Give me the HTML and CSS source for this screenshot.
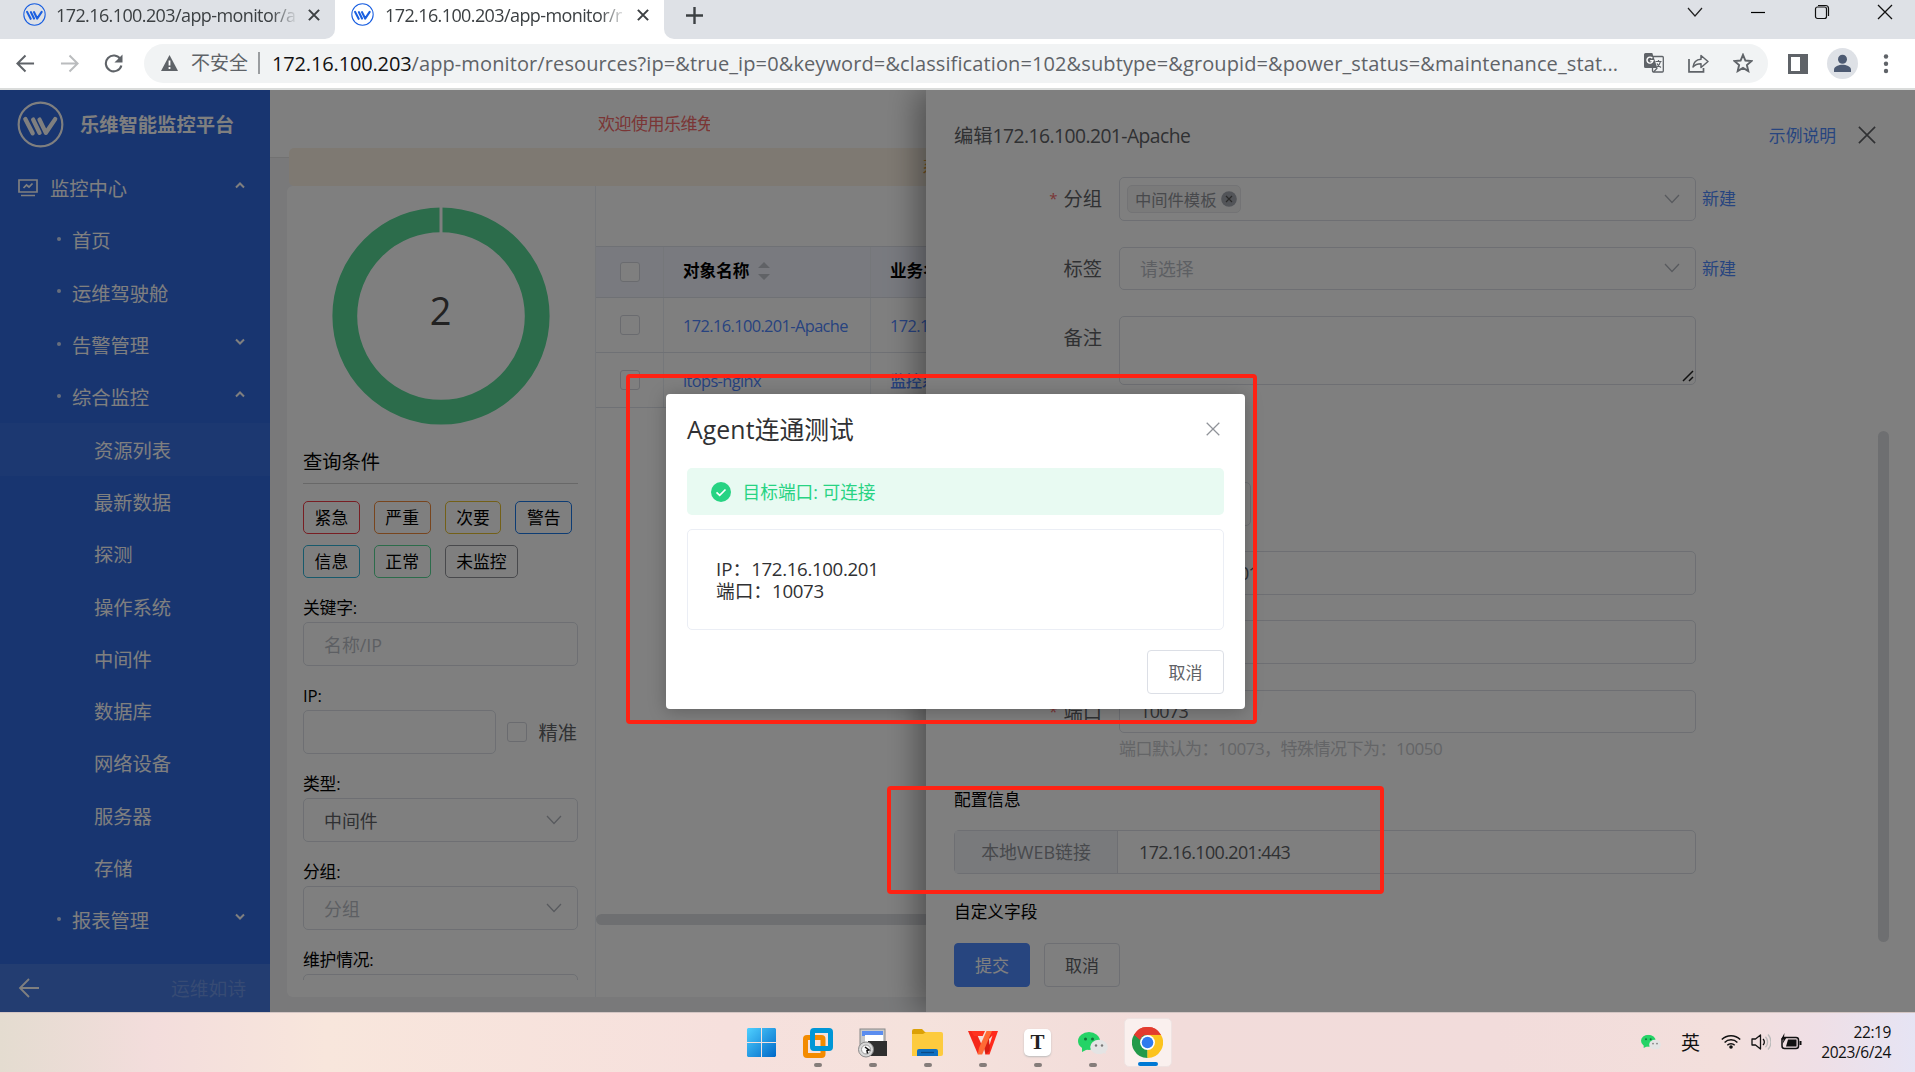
FILE: index.html
```html
<!DOCTYPE html>
<html lang="zh-CN">
<head>
<meta charset="utf-8">
<title>乐维智能监控平台</title>
<link rel="stylesheet" href="styles.css">
</head>
<body>
<svg class="defs" width="0" height="0">
  <defs>
    <symbol id="logo" viewBox="0 0 48 48"><circle cx="24" cy="24" r="22.3" fill="none" stroke="currentColor" stroke-width="2.2"/><path d="M8.500 18.500L16 33M16.500 19L23 32.500M23 19l6.500 13.500L39 18.500" fill="none" stroke="currentColor" stroke-width="4.400" stroke-linecap="round" stroke-linejoin="round"/></symbol>
    <symbol id="down" viewBox="0 0 16 10"><path d="M1 1l7 7.500L15 1" fill="none" stroke="currentColor" stroke-width="1.300"/></symbol>
    <symbol id="caret" viewBox="0 0 10 8"><path d="M1 1.500l4 4 4-4" fill="none" stroke="currentColor" stroke-width="2"/></symbol>
    <symbol id="cross" viewBox="0 0 20 20"><path d="M1 1l18 18M19 1L1 19" fill="none" stroke="currentColor" stroke-width="1.800"/></symbol>
    <symbol id="cross-bold" viewBox="0 0 20 20"><path d="M1.500 1.500l17 17M18.500 1.500l-17 17" fill="none" stroke="currentColor" stroke-width="3.400"/></symbol>
    <symbol id="wechat" viewBox="0 0 30 22"><ellipse cx="11" cy="9" rx="11" ry="9" fill="#25d366"/><path d="M4 14l0 6 6-3z" fill="#25d366"/><circle cx="7.500" cy="7" r="1.500" fill="#12733a"/><circle cx="14.500" cy="7" r="1.500" fill="#12733a"/><ellipse cx="21" cy="15" rx="8.800" ry="7.200" fill="#e4e4e4"/><path d="M24 20l4 2-1-4z" fill="#e4e4e4"/><circle cx="18" cy="13.500" r="1.200" fill="#777"/><circle cx="24" cy="13.500" r="1.200" fill="#777"/></symbol>
  </defs>
</svg>

<header class="tabstrip">
  <div class="tab"><svg class="fav"><use href="#logo"/></svg><span class="tab-title">172.16.100.203/app-monitor/a</span><svg class="tab-x"><use href="#cross-bold"/></svg></div>
  <div class="tab active"><svg class="fav"><use href="#logo"/></svg><span class="tab-title">172.16.100.203/app-monitor/r</span><svg class="tab-x"><use href="#cross-bold"/></svg></div>
  <div class="newtab"><svg width="17" height="17" viewBox="0 0 17 17"><path d="M8.500 0v17M0 8.500h17" stroke="#3c4043" stroke-width="2.400"/></svg></div>
  <div class="winctl">
    <svg width="16" height="16" viewBox="0 0 16 16"><path d="M1 4l7 8 7-8" fill="none" stroke="#222" stroke-width="1.200"/></svg>
    <svg width="16" height="16" viewBox="0 0 16 16"><path d="M1 8.500h14" stroke="#000" stroke-width="1.200"/></svg>
    <svg width="16" height="16" viewBox="0 0 16 16"><rect x="1.500" y="3" width="11" height="11.500" rx="2" fill="none" stroke="#111" stroke-width="1.200"/><path d="M4 1.500h7.500a3 3 0 0 1 3 3V12" fill="none" stroke="#111" stroke-width="1.200"/></svg>
    <svg width="16" height="16" viewBox="0 0 16 16"><path d="M1 1l14 14M15 1L1 15" stroke="#111" stroke-width="1.300"/></svg>
  </div>
</header>

<div class="toolbar">
  <svg class="nav-btn" viewBox="0 0 20 20"><path d="M19 10H2M10 1.500L1.500 10l8.500 8.500" fill="none" stroke="#5f6368" stroke-width="2.100"/></svg>
  <svg class="nav-btn" viewBox="0 0 20 20"><path d="M1 10h17M10 1.500l8.500 8.500-8.500 8.500" fill="none" stroke="#babcbe" stroke-width="2.100"/></svg>
  <svg class="nav-btn" viewBox="0 0 20 20"><path d="M17.300 5.500A8.300 8.300 0 1 0 18.300 12" fill="none" stroke="#5f6368" stroke-width="2.200"/><path d="M19.500 0.500v8.500h-8.500z" fill="#5f6368"/></svg>
  <div class="omnibox">
    <svg width="17" height="16" viewBox="0 0 17 16"><path d="M8.500 0L17 16H0z" fill="#5f6368"/><path d="M8.500 5.500v5M8.500 12v2" stroke="#fff" stroke-width="1.800"/></svg>
    <span class="insecure">不安全</span>
    <span class="url"><b>172.16.100.203</b>/app-monitor/resources?ip=&amp;true_ip=0&amp;keyword=&amp;classification=102&amp;subtype=&amp;groupid=&amp;power_status=&amp;maintenance_stat...</span>
    <span class="omni-icons">
      <svg width="20" height="20" viewBox="0 0 20 20"><rect x="8.500" y="3.500" width="10.800" height="15.500" rx="1" fill="#f1f3f4" stroke="#5f6368" stroke-width="1.300"/><path d="M1.500 0h6.800l5 15H1.500A1.500 1.500 0 0 1 0 13.500v-12A1.500 1.500 0 0 1 1.500 0z" fill="#5f6368"/><path d="M8.300 5.200a3 3 0 1 0 .6 2.600H6.200" fill="none" stroke="#fff" stroke-width="1.400"/><path d="M11.500 8.500h6M14.500 7v1.500M12.500 14.500c2-1.500 3.500-3.500 4-6M13 10.500c.8 1.800 2.200 3 4 4M9.500 19l3.800-4" fill="none" stroke="#5f6368" stroke-width="1.200"/></svg>
      <svg width="21" height="20" viewBox="0 0 21 20"><path d="M1 6v12.800h14.500V15" fill="none" stroke="#5f6368" stroke-width="1.700"/><path d="M5 14c.5-5 3.500-7.500 8-7.800V2.500l7 6-7 6v-3.700c-3.500 0-6 .9-8 3.200z" fill="none" stroke="#5f6368" stroke-width="1.500" stroke-linejoin="round"/></svg>
      <svg width="20" height="20" viewBox="0 0 20 20"><path d="M10 1.800l2.400 5.700 6.200.5-4.700 4 1.400 6.100L10 14.900l-5.300 3.200L6.100 12l-4.700-4 6.200-.5z" fill="none" stroke="#5f6368" stroke-width="1.900"/></svg>
    </span>
  </div>
  <svg class="side-panel" width="20" height="20" viewBox="0 0 20 20"><path d="M0 0h20v20H0zM3 3v14h9V3z" fill="#5f6368" fill-rule="evenodd"/></svg>
  <svg class="avatar" width="31" height="31" viewBox="0 0 31 31"><circle cx="15.500" cy="15.500" r="15.500" fill="#dee1e6"/><circle cx="15.500" cy="11.300" r="4.500" fill="#4d5a72"/><path d="M7 24v-2.500c0-3 5-4.800 8.500-4.800s8.500 1.800 8.500 4.800V24z" fill="#4d5a72"/></svg>
  <svg class="more" width="6" height="20" viewBox="0 0 6 20"><circle cx="3" cy="2.500" r="2.200" fill="#5f6368"/><circle cx="3" cy="9.800" r="2.200" fill="#5f6368"/><circle cx="3" cy="17" r="2.200" fill="#5f6368"/></svg>
</div>

<div class="viewport">
  <aside class="sidebar">
    <div class="brand"><svg><use href="#logo"/></svg><span>乐维智能监控平台</span></div>
    <nav class="menu">
      <div class="item root"><svg class="mon" viewBox="0 0 20 18"><path d="M1 1h18v12H1zM3 16.500h14" fill="none" stroke="currentColor" stroke-width="1.700"/><path d="M5.500 9l3-3 2.500 2 3.500-3.500" fill="none" stroke="currentColor" stroke-width="1.700"/></svg>监控中心<svg class="caret up"><use href="#caret"/></svg></div>
      <div class="item lvl1">首页</div>
      <div class="item lvl1">运维驾驶舱</div>
      <div class="item lvl1">告警管理<svg class="caret"><use href="#caret"/></svg></div>
      <div class="item lvl1">综合监控<svg class="caret up"><use href="#caret"/></svg></div>
      <div class="item lvl2 selected">资源列表</div>
      <div class="item lvl2">最新数据</div>
      <div class="item lvl2">探测</div>
      <div class="item lvl2">操作系统</div>
      <div class="item lvl2">中间件</div>
      <div class="item lvl2">数据库</div>
      <div class="item lvl2">网络设备</div>
      <div class="item lvl2">服务器</div>
      <div class="item lvl2">存储</div>
      <div class="item lvl1">报表管理<svg class="caret"><use href="#caret"/></svg></div>
    </nav>
    <div class="side-foot"><svg width="21" height="20" viewBox="0 0 21 20"><path d="M21 10H2M11 1L2 10l9 9" fill="none" stroke="currentColor" stroke-width="1.800"/></svg><span>运维如诗</span></div>
  </aside>

  <main class="main">
    <div class="topbar"><span class="welcome">欢迎使用乐维免</span></div>
    <div class="notice">系统授权即将到期</div>
    <div class="content">
      <section class="filters">
        <div class="donut">
          <svg width="218" height="218" viewBox="0 0 218 218"><circle cx="109" cy="109" r="96.200" fill="none" stroke="#58d896" stroke-width="24.800"/><path d="M109 0v26" stroke="#fff" stroke-width="3"/></svg>
          <span>2</span>
        </div>
        <h3>查询条件</h3>
        <div class="tags">
          <span class="tag red">紧急</span><span class="tag orange">严重</span><span class="tag yellow">次要</span><span class="tag blue">警告</span>
          <span class="tag cyan">信息</span><span class="tag green">正常</span><span class="tag gray">未监控</span>
        </div>
        <label>关键字:</label><div class="input ph">名称/IP</div>
        <label>IP:</label>
        <div class="ip-row"><div class="input"></div><i class="check"></i><span>精准</span></div>
        <label>类型:</label><div class="input select">中间件<svg><use href="#down"/></svg></div>
        <label>分组:</label><div class="input select ph">分组<svg><use href="#down"/></svg></div>
        <label>维护情况:</label><div class="input"></div>
      </section>
      <section class="table-wrap">
        <div class="table">
          <div class="tr th"><div><i class="check"></i></div><div><span>对象名称</span><svg class="sort" viewBox="0 0 12 18"><path d="M0 6l6-6 6 6zM0 12l6 6 6-6z" fill="#c0c4cc"/></svg></div><div><span>业务名称</span></div></div>
          <div class="tr"><div><i class="check"></i></div><div class="a">172.16.100.201-Apache</div><div class="a">172.16.100.201</div></div>
          <div class="tr"><div><i class="check"></i></div><div class="a">itops-nginx</div><div class="a">监控系统</div></div>
        </div>
        <div class="hscroll"></div>
      </section>
    </div>
  </main>

  <section class="drawer">
    <div class="drawer-head"><span>编辑<em>172.16.100.201-Apache</em></span><a>示例说明</a><svg><use href="#cross"/></svg></div>
    <div class="row"><label class="req">分组</label><div class="input select multi"><span class="chip">中间件模板<svg viewBox="0 0 16 16"><circle cx="8" cy="8" r="7.800" fill="#a4a8b0"/><path d="M5 5l6 6M11 5l-6 6" stroke="#555" stroke-width="1.200"/></svg></span><svg><use href="#down"/></svg></div><a>新建</a></div>
    <div class="row"><label>标签</label><div class="input select ph">请选择<svg><use href="#down"/></svg></div><a>新建</a></div>
    <div class="row area"><label>备注</label><div class="input"><svg class="grip" viewBox="0 0 12 12"><path d="M1 11L11 1M7 11l4-4" stroke="#222" stroke-width="1.500"/></svg></div></div>
    <div class="row short"><label></label><div class="input"></div></div>
    <div class="row"><label></label><div class="input"><em>172.16.100.201</em></div></div>
    <div class="row"><label></label><div class="input"></div></div>
    <div class="row"><label class="req">端口</label><div class="input"><em>10073</em></div></div>
    <p class="hint">端口默认为：<em>10073</em>，特殊情况下为：<em>10050</em></p>
    <h4>配置信息</h4>
    <div class="group"><span>本地<em>WEB</em>链接</span><div><em>172.16.100.201:443</em></div></div>
    <h4 class="custom">自定义字段</h4>
    <div class="actions"><span class="btn primary">提交</span><span class="btn">取消</span></div>
    <div class="vscroll"></div>
  </section>

  <div class="mask"></div>

  <section class="modal">
    <div class="modal-head"><span><em>Agent</em>连通测试</span><svg><use href="#cross"/></svg></div>
    <div class="alert"><svg width="20" height="20" viewBox="0 0 20 20"><circle cx="10" cy="10" r="10" fill="#27d383"/><path d="M5.500 10.300l3.200 3 5.800-5.800" fill="none" stroke="#fff" stroke-width="1.700"/></svg><span>目标端口: 可连接</span></div>
    <div class="result"><p>IP：<em>172.16.100.201</em></p><p>端口：<em>10073</em></p></div>
    <div class="modal-foot"><span class="btn">取消</span></div>
  </section>
</div>

<footer class="taskbar">
  <div class="apps">
    <div class="app"><svg width="29" height="29" viewBox="0 0 29 29"><defs><linearGradient id="win" x1="0" y1="0" x2="1" y2="1"><stop offset="0" stop-color="#4fd0ff"/><stop offset="1" stop-color="#0068c8"/></linearGradient></defs><path d="M1 0h13v14H0V1zM15 0h13l1 1v13H15zM0 15h14v14H1l-1-1zM15 15h14v13l-1 1H15z" fill="url(#win)"/></svg></div>
    <div class="app on"><svg width="30" height="30" viewBox="0 0 30 30"><rect x="9.500" y="2.500" width="18" height="18" rx="1.500" fill="none" stroke="#0096d6" stroke-width="5"/><rect x="2.500" y="9.500" width="17.500" height="18" rx="1.500" fill="none" stroke="#f38b00" stroke-width="5"/><path d="M9.500 7v6M14 20.500h9" fill="none" stroke="#0096d6" stroke-width="5"/></svg></div>
    <div class="app on"><svg width="30" height="30" viewBox="0 0 30 30"><rect x="2" y="1" width="25" height="18" fill="#c9c9c9" stroke="#888"/><rect x="4" y="3" width="21" height="5" fill="#5b8def"/><rect x="7" y="7" width="18" height="10" fill="#fff"/><rect x="10" y="13" width="19" height="15" fill="#2f2f2f"/><circle cx="8" cy="21.500" r="7.500" fill="#d8d8d8" stroke="#888"/><circle cx="8" cy="21.500" r="4.500" fill="#fafafa" stroke="#999"/><path d="M7 19l4 3-2 .5.500 3" stroke="#111" stroke-width="1.500" fill="none"/></svg></div>
    <div class="app on"><svg width="31" height="29" viewBox="0 0 31 29"><path d="M0 3a2 2 0 0 1 2-2h8l3 3h14v8H0z" fill="#dca106"/><path d="M0 6h11l3-2h15a2 2 0 0 1 2 2v20a2 2 0 0 1-2 2H0z" fill="#fdcb3e"/><path d="M5 28v-5a2 2 0 0 1 2-2h17a2 2 0 0 1 2 2v5z" fill="#0f6fc0"/><path d="M9 24.500h13" stroke="#0a4a86" stroke-width="1.300"/></svg></div>
    <div class="app on"><svg width="30" height="24" viewBox="0 0 30 24"><path d="M0 0h7.500L14 14.500 10 23.500z" fill="#f5281a"/><path d="M3 0h14l-2.300 5H6z" fill="#ff3320"/><path d="M22.500 0H30l-8.500 23.500H17.500l1-8z" fill="#ff2a1c"/><path d="M18.500 4l4 0-1 16-4 3.500-2.500-11z" fill="#d81e12"/><path d="M9.800 23.500h4.400L24 0h-5.500L11 17z" fill="#ff6a35"/><path d="M21 8l3.500-3.500L21.500 14z" fill="#f5e2dc"/></svg></div>
    <div class="app on"><div class="typora">T</div></div>
    <div class="app on"><svg width="30" height="22"><use href="#wechat"/></svg></div>
    <div class="app current"><svg width="31" height="31" viewBox="0 0 48 48"><path d="M24 24L3.200 12A24 24 0 0 1 44.800 12z" fill="#e33b2e"/><path d="M24 24L44.800 12A24 24 0 0 1 24 48z" fill="#fcc31e"/><path d="M24 24V48A24 24 0 0 1 3.200 12z" fill="#229a4a"/><path d="M24 12h20.800L34 30z" fill="#fcc31e"/><path d="M34.400 30L24 48 24 34z" fill="#fcc31e"/><path d="M3.200 12L13.600 30 24 24 24 12z" fill="#229a4a"/><path d="M3.200 12A24 24 0 0 1 44.800 12H24a12 12 0 0 0-11.500 8z" fill="#e33b2e"/><circle cx="24" cy="24" r="11.500" fill="#fff"/><circle cx="24" cy="24" r="9" fill="#2f7bef"/></svg></div>
  </div>
  <div class="tray">
    <svg width="20" height="16" viewBox="0 0 30 22"><use href="#wechat"/></svg>
    <span class="ime">英</span>
    <svg width="20" height="15" viewBox="0 0 20 15"><path d="M.8 5.500a13 13 0 0 1 18.400 0M3.600 8.500a9 9 0 0 1 12.800 0M6.300 11.300a5.200 5.200 0 0 1 7.400 0" fill="none" stroke="#111" stroke-width="1.500"/><circle cx="10" cy="13" r="1.800" fill="#111"/></svg>
    <svg width="20" height="18" viewBox="0 0 20 18"><path d="M1 6h3.500L9.500 2v14l-5-4H1z" fill="none" stroke="#111" stroke-width="1.300" stroke-linejoin="round"/><path d="M12 6a4 4 0 0 1 0 6" fill="none" stroke="#111" stroke-width="1.300"/><path d="M14.500 3.800a7.500 7.500 0 0 1 0 10.400M17 1.500a11 11 0 0 1 0 15" fill="none" stroke="#bbb" stroke-width="1.300"/></svg>
    <svg width="21" height="17" viewBox="0 0 21 17"><rect x="1" y="4.500" width="16.500" height="11" rx="2.500" fill="none" stroke="#111" stroke-width="1.500"/><path d="M5 13.500l2-7h8.500v7zM18.500 8h2v4h-2z" fill="#111"/><path d="M3.500 0L0 6.500h2.500L1.500 11l4-6.500H3z" fill="#111"/></svg>
    <div class="clock"><span>22:19</span><span>2023/6/24</span></div>
  </div>
</footer>

<div class="mark mark-dialog"></div>
<div class="mark mark-link"></div>
</body>
</html>
```
FILE: styles.css
```css
* { box-sizing: border-box; }
body { margin: 0; width: 1915px; height: 1072px; overflow: hidden; position: relative; font-family: "Open Sans", "Noto Sans CJK SC", sans-serif; font-size: 18px; color: #606266; background: #fff; white-space: nowrap; }
h3, h4, p { margin: 0; font-weight: 400; }
em, i { font-style: normal; }
svg { flex: none; display: block; }
.defs { position: absolute; }
a { color: #4f8bff; }

/* browser chrome */
.tabstrip { display: flex; height: 39px; background: #fff; }
.tab { width: 335px; display: flex; align-items: flex-start; padding: 2px 0 0 23px; color: #3c4043; background: #dee1e6; border-radius: 0 0 10px 0; }
.tab.active { width: 329px; background: #fff; padding-left: 16px; }
.fav { width: 23px; height: 23px; color: #1a5fe0; margin-top: 1px; }
.tab-title { width: 246px; margin-left: 10px; line-height: 26px; font-size: 18px; letter-spacing: -.6px; -webkit-mask-image: linear-gradient(90deg, #000 215px, transparent 242px); mask-image: linear-gradient(90deg, #000 215px, transparent 242px); }
.tab.active .tab-title { margin-left: 11px; }
.tab-x { width: 12px; height: 12px; margin: 7px 0 0 6px; color: #3c4043; }
.newtab { padding: 7px 0 0 22px; flex: 1; background: #dee1e6; border-radius: 0 0 0 10px; }
.winctl { display: flex; gap: 47.500px; padding: 4px 22px 0 0; background: #dee1e6; }

.toolbar { display: flex; align-items: center; height: 51px; border-bottom: 2px solid #dadcdb; padding-left: 16px; background: #fff; }
.nav-btn { width: 19px; height: 19px; margin-right: 25px; }
.nav-btn + .nav-btn + .nav-btn { margin-right: 21px; }
.omnibox { display: flex; align-items: center; width: 1624px; height: 39px; margin-bottom: 1px; border-radius: 20px; background: #f1f3f4; padding: 0 15px 0 17px; color: #5f6368; }
.insecure { margin-left: 13px; font-size: 19px; line-height: 22px; padding-right: 10px; border-right: 2px solid #9a9da0; }
.url { margin-left: 12px; width: 1374px; font-size: 20px; letter-spacing: .11px; }
.url b { font-weight: 400; color: #111; letter-spacing: -.15px; }
.omni-icons { display: flex; gap: 24px; }
.side-panel { margin-left: 20px; }
.avatar { margin-left: 19px; }
.more { margin-left: 25px; }

/* application */
.viewport { position: relative; display: flex; height: 922px; overflow: hidden; }
.sidebar { width: 270px; background: #306ae0; color: #fff; display: flex; flex-direction: column; }
.brand { height: 72px; padding: 0 0 4px 17px; display: flex; align-items: center; gap: 16px; font-size: 19.300px; font-weight: 700; }
.brand svg { width: 47px; height: 47px; }
.menu { flex: 1; font-size: 19.300px; }
.item { height: 52.300px; display: flex; align-items: center; padding-right: 25px; }
.root { padding-left: 18px; }
.mon { width: 20px; height: 18px; margin-right: 12px; }
.lvl1 { padding-left: 57px; }
.lvl1::before { content: ""; width: 4px; height: 4px; border-radius: 50%; background: #cfdcf8; margin: -3px 11px 0 0; }
.lvl2 { padding-left: 94px; }
.selected { background: #3870e2; }
.caret { width: 10px; height: 8px; margin: -6px 0 0 auto; }
.caret.up { transform: rotate(180deg); }
.side-foot { height: 48px; background: #467ae2; display: flex; align-items: center; justify-content: space-between; padding: 0 24px 0 18px; font-size: 18.800px; }
.side-foot span { color: #6f97e8; }

.main { width: 1645px; background: #f2f3f5; }
.topbar { height: 68px; background: #fff; border-bottom: 1px solid #e4e4e4; padding-left: 328px; }
.welcome { display: block; width: 112px; overflow: hidden; line-height: 67px; color: #f56c6c; font-size: 17px; letter-spacing: -.5px; }
.notice { height: 38px; margin: -10px 0 0 19px; position: relative; background: #fdf3e5; border-radius: 5px; padding-left: 633px; line-height: 38px; color: #e6a23c; font-size: 17px; }
.content { height: 811px; margin-left: 17px; background: #fff; border-radius: 6px; display: flex; align-items: flex-start; }
.filters { width: 308px; height: 794px; overflow: hidden; padding: 0 17px 0 16px; color: #000; }
.donut { height: 251px; padding-top: 20.500px; display: grid; justify-content: center; }
.donut svg, .donut span { grid-area: 1 / 1; }
.donut span { height: 206px; display: flex; align-items: center; justify-content: center; font-size: 38px; color: #444; }
.filters h3 { height: 47px; line-height: 49px; font-size: 19.300px; border-bottom: 1px solid #d0d0d0; }
.tags { display: flex; flex-wrap: wrap; gap: 11px 14px; margin: 17px -10px 0 0; }
.tag { height: 33px; padding: 0 10.600px; border: 1.500px solid; border-radius: 5px; font-size: 16.800px; line-height: 31px; -webkit-text-fill-color: #000; }
.red { border-color: #f03c46; } .orange { border-color: #f08a3c; } .yellow { border-color: #e6c030; } .blue { border-color: #1a78e8; }
.cyan { border-color: #30b4d8; } .green { border-color: #58d896; } .gray { border-color: #909399; }
.filters label { display: block; line-height: 28px; padding-top: 16px; font-size: 16.800px; height: 44px; letter-spacing: -.2px; }
.input { height: 44px; border: 1.500px solid #dcdfe6; border-radius: 5px; padding: 0 20px; display: flex; align-items: center; font-size: 17.900px; color: #606266; background: #fff; }
.ph { color: #bbbec6; }
.select { justify-content: space-between; padding-right: 15px; }
.select > svg { width: 16px; height: 10px; color: #b0b4bc; }
.ip-row { display: flex; align-items: center; }
.ip-row .input { width: 193px; margin-right: 11px; }
.ip-row span { margin-left: 12px; font-size: 19.300px; color: #606266; }
.check { display: block; width: 19.500px; height: 19.500px; border: 1.500px solid #d4d7de; border-radius: 3px; background: #fff; }

.table-wrap { flex: 1; height: 811px; border-left: 1px solid #ebeef5; padding-top: 60px; overflow: hidden; }
.tr { display: grid; grid-template-columns: 68px 207px 1fr; height: 55px; border-bottom: 1.500px solid #dfe2ea; font-size: 16.600px; }
.tr > div { display: flex; align-items: center; padding-left: 19px; border-right: 1px solid #ebeef5; }
.tr > div:first-child { padding-left: 24px; }
.th { height: 52px; background: #f2f5ff; border-top: 1.500px solid #dfe2ea; color: #000; font-weight: 700; }
.th span { margin-top: -4px; }
.sort { width: 12px; height: 18px; margin: -2px 0 0 9px; }
.tr .a { color: #4f86ff; font-weight: 500; font-size: 16.400px; letter-spacing: -.62px; }
.hscroll { width: 900px; height: 11px; margin-top: 506px; border-radius: 6px; background: #dddfe3; }

.drawer { position: absolute; left: 926px; top: 0; width: 989px; height: 922px; background: #fff; box-shadow: -8px 0 30px rgba(0, 0, 0, .38); padding-left: 28px; }
.drawer-head { display: flex; align-items: center; height: 87px; font-size: 19.300px; color: #606266; padding-top: 2px; }
.drawer-head em { letter-spacing: -.55px; }
.drawer-head a { margin-left: auto; font-size: 16.800px; }
.drawer-head svg { width: 18px; height: 18px; margin: 0 39px 0 22px; color: #606266; }
.row { display: flex; margin-bottom: 25.500px; }
.row label { width: 148px; margin-right: 17px; line-height: 43.600px; text-align: right; font-size: 19.300px; color: #606266; }
.req::before { content: "*"; color: #f56c6c; font-size: 15px; margin-right: 6px; vertical-align: 2px; }
.row .input { width: 577px; height: 43.600px; }
.row > a { margin-left: 6px; line-height: 44px; font-size: 17px; }
.multi { padding-left: 7px; }
.chip { height: 28px; display: flex; align-items: center; gap: 5px; padding: 0 3px 0 7px; border: 1px solid #e6e7ea; border-radius: 5px; background: #f4f4f5; color: #909399; font-size: 16.300px; }
.chip svg { width: 16px; height: 16px; }
.row.area { margin-bottom: 97.300px; }
.row.area .input { height: 69px; align-items: flex-end; justify-content: flex-end; padding: 0 1px 2px 0; }
.grip { width: 12px; height: 12px; }
.row.short .input { width: 132px; }
.input em, .group div em { letter-spacing: -.6px; }
.hint { margin: -25px 0 0 165px; line-height: 30px; font-size: 17px; color: #c8cace; letter-spacing: -.5px; }
h4 { font-size: 16.700px; line-height: 28px; color: #000; margin-top: 22px; }
.group { display: flex; width: 742px; height: 44px; margin-top: 16px; border: 1.500px solid #dcdfe6; border-radius: 5px; line-height: 42px; font-size: 17.900px; }
.group span { width: 163px; text-align: center; background: #f2f5f9; border-right: 1.500px solid #dcdfe6; color: #909399; }
.group div { padding-left: 21px; }
.custom { margin-top: 24px; }
.actions { display: flex; gap: 14px; margin-top: 17px; }
.btn { width: 76px; height: 44px; display: flex; align-items: center; justify-content: center; border: 1.500px solid #dcdfe6; border-radius: 4px; font-size: 17px; color: #606266; background: #fff; }
.primary { background: #4f8bff; border-color: #4f8bff; color: #fff; }
.vscroll { position: absolute; left: 952px; top: 341px; width: 11px; height: 511px; border-radius: 6px; background: #dddfe3; }

.mask { position: absolute; inset: 0; background: rgba(0, 0, 0, .5); }

.modal { position: absolute; left: 666px; top: 304px; width: 579px; height: 315px; background: #fff; border-radius: 4px; padding: 0 21px; box-shadow: 0 2px 18px rgba(0, 0, 0, .25); }
.modal-head { display: flex; align-items: center; justify-content: space-between; height: 74px; padding-bottom: 6px; font-size: 24.800px; color: #303133; }
.modal-head em { letter-spacing: .1px; }
.modal-head svg { width: 14px; height: 14px; color: #909399; margin: 2px 4px 0 0; }
.alert { height: 47px; background: #e8faf2; border-radius: 5px; display: flex; align-items: center; gap: 12px; padding-left: 23.500px; color: #27d383; font-size: 17.700px; }
.alert span { margin-top: -2px; }
.result { height: 101px; margin-top: 14px; border: 1.500px solid #ebeef5; border-radius: 5px; padding: 28px 28px 0; font-size: 18.700px; line-height: 22px; color: #303133; }
.result em { letter-spacing: -.35px; }
.modal-foot { display: flex; justify-content: flex-end; margin-top: 20px; }
.modal-foot .btn { padding-bottom: 2px; width: 77px; }

/* taskbar */
.taskbar { position: relative; display: flex; justify-content: flex-end; height: 60px; border-top: 1px solid #d4c6c4; background: linear-gradient(90deg, #e4dcd0, #f3dddc 8%, #f8e6dc 17%, #f6e0dd 38%, #f5e2dc 48%, #f2dcda 60%, #f2dcdb 78%, #f3dfdc 90%, #efdfe6 95%, #e6e4f4 100%); }
.apps { display: flex; gap: 7px; margin-right: auto; padding: 5px 0 0 737px; }
.app { position: relative; width: 48px; height: 49px; display: flex; align-items: center; justify-content: center; border-radius: 5px; }
.app:nth-child(2) { margin-left: 1.500px; }
.app.on::after, .current::after { content: ""; position: absolute; bottom: 0; width: 8px; height: 4px; border-radius: 2px; background: #857d7a; }
.current { background: #faf0ee; border: 1px solid #efe3e2; }
.current::after { width: 20px; background: #0078d4; }
.typora { width: 27px; height: 27px; border-radius: 5px; background: #fff; box-shadow: 0 1px 2px #bbb; text-align: center; font: 700 21px/27px "Liberation Serif", serif; color: #222; }
.tray { display: flex; align-items: center; padding: 0 24px 2px 0; color: #111; }
.ime { font-size: 19px; margin: 0 21px 0 20px; }
.tray svg + svg { margin-left: 10px; }
.clock { width: 89px; display: flex; flex-direction: column; align-items: flex-end; font-size: 15.500px; line-height: 20px; letter-spacing: -.4px; }

/* highlight frames */
.mark { position: absolute; border: 4px solid #ff2213; border-radius: 4px; }
.mark-dialog { left: 626px; top: 374px; width: 631px; height: 350px; }
.mark-link { left: 887px; top: 786px; width: 497px; height: 108px; }
```
